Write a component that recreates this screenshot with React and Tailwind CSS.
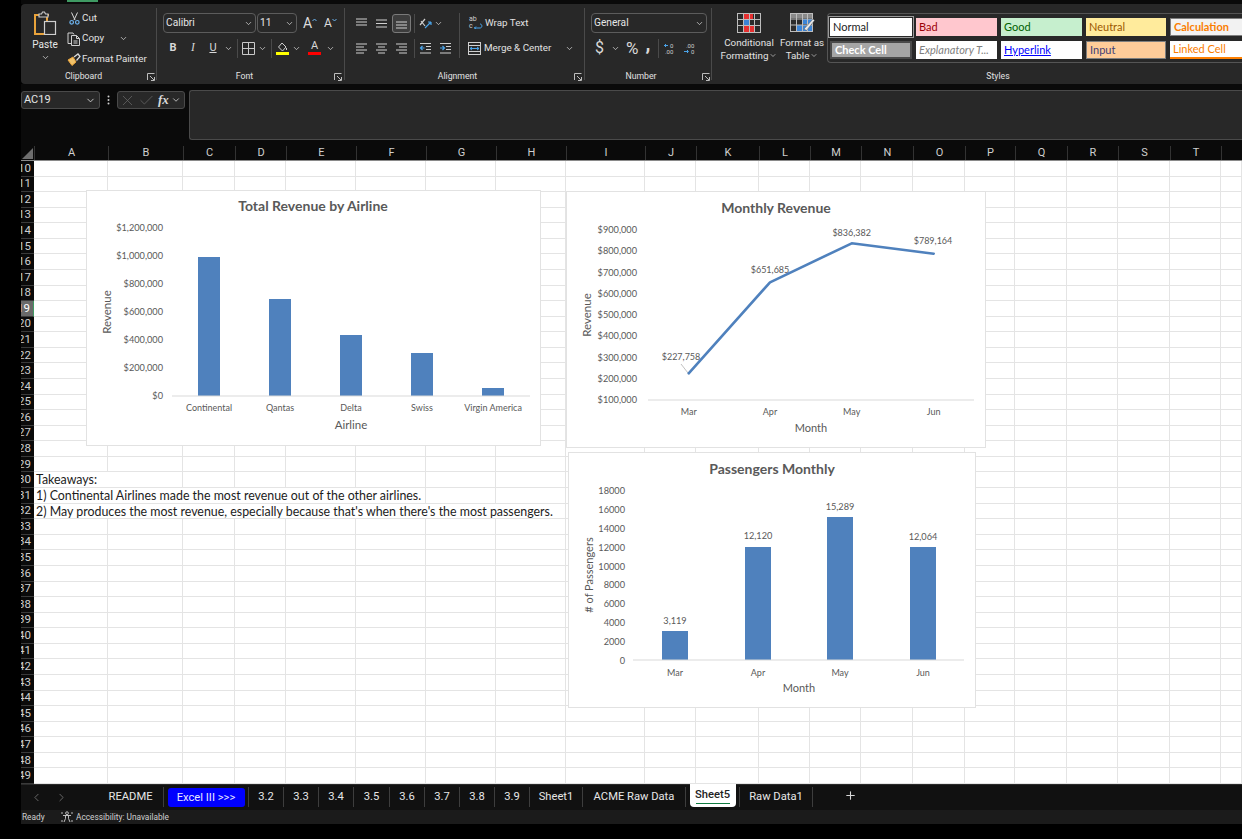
import { ChevronDown, ChevronLeft, ChevronRight, Plus, X, Check } from "lucide-react";

const chartFont = "Lato, 'Liberation Sans', sans-serif";

const Chev = ({ className = "" }) => (
  <ChevronDown size={9} strokeWidth={2} className={"text-[#d4d4d4] shrink-0 " + className} />
);

const Launcher = ({ className = "" }) => (
  <svg width="8" height="8" viewBox="0 0 8 8" className={"absolute -bottom-[1px] " + className} fill="none" stroke="#bdbdbd" strokeWidth="1">
    <path d="M0.5 7V0.5H7.5M3 3l4 4M4 7.5h3.5V4" />
  </svg>
);

const Lines = ({ rows }) => (
  <svg width="13" height="13" viewBox="0 0 13 13" stroke="#cfcfcf" strokeWidth="1.2">
    {rows.map((r, i) => (
      <line key={i} x1={r[0]} x2={r[1]} y1={r[2]} y2={r[2]} />
    ))}
  </svg>
);

const Indent = ({ flip }) => (
  <svg width="13" height="13" viewBox="0 0 13 13" fill="none" strokeWidth="1.2">
    <path d="M1 1.5h11M7 4.5h5M7 7.5h5M1 11h11" stroke="#cfcfcf" />
    <path d={flip ? "M1 6h4M3.5 4l2 2-2 2" : "M5.5 6h-4M3.5 4l-2 2 2 2"} stroke="#4aa3e8" />
  </svg>
);

const Group = ({ width, label, labelPad, launcher, children }) => (
  <div className={"relative mt-[4px] h-[72px] shrink-0 flex flex-col border-r border-[#4a4a4a] " + width}>
    <div className="flex-1 min-h-0">{children}</div>
    <div className={"h-[13px] translate-y-[3px] text-center text-[8.7px] leading-[13px] text-[#e2e2e2] " + labelPad}>{label}</div>
    {launcher && <Launcher className={launcher} />}
  </div>
);

const Combo = ({ text, width }) => (
  <div className={"h-[20px] flex items-center justify-between rounded-[4px] border border-[#5c5c5c] pl-[2px] pr-[2px] text-[10.2px] text-[#e6e6e6] " + width}>
    <span>{text}</span>
    <Chev />
  </div>
);

const RibbonSep = ({ className = "" }) => <div className={"w-px h-[19px] bg-[#4a4a4a] shrink-0 " + className} />;

const GrowA = ({ size, up }) => (
  <span className={"flex items-start text-[#dcdcdc] " + size}>
    A
    <svg width="5" height="4" viewBox="0 0 5 4" fill="none" stroke="#6db3ee" className="mt-[3px]">
      <path d={up ? "M.5 3l2-2 2 2" : "M.5 1l2 2 2-2"} />
    </svg>
  </span>
);

const Clipboard = () => (
  <div className="flex">
    <div className="ml-[3px] w-[42px] flex flex-col items-center pt-[3px]">
      <svg width="24" height="24" viewBox="0 0 24 24" fill="none">
        <path d="M8 4H2v19h9" stroke="#e9a33b" strokeWidth="2" />
        <path d="M16 4h-2v6" stroke="#e9a33b" strokeWidth="2" />
        <path d="M6 6V3h2.5l1-2h2l1 2H15v3z" fill="#2b2b2b" stroke="#c9c9c9" strokeWidth="1.2" />
        <rect x="11.5" y="10.5" width="11" height="13" fill="#2b2b2b" stroke="#cfcfcf" strokeWidth="1.2" />
      </svg>
      <div className="mt-[3px] text-[10px] leading-[14px] text-[#e6e6e6]">Paste</div>
      <Chev className="mt-[1px]" />
    </div>
    <div className="pt-[1px] flex flex-col gap-[2.5px] text-[9.8px] text-[#e2e2e2] whitespace-nowrap">
      <div className="h-[18px] flex items-center">
        <span className="w-[16px] flex justify-center">
          <svg width="11" height="13" viewBox="0 0 11 13" fill="none">
            <path d="M2.5 0.5l3.5 7.5M8.5 0.5L5 8" stroke="#d8d8d8" />
            <circle cx="2.7" cy="10.3" r="1.8" stroke="#6db3ee" strokeWidth="1.2" />
            <circle cx="8.3" cy="10.3" r="1.8" stroke="#6db3ee" strokeWidth="1.2" />
          </svg>
        </span>
        <span>Cut</span>
      </div>
      <div className="h-[18px] flex items-center">
        <span className="w-[16px] flex justify-center">
          <svg width="14" height="14" viewBox="0 0 14 14" fill="none" stroke="#cfcfcf" strokeWidth="1">
            <path d="M4 11.5H1V1h5l1 1.5" />
            <path d="M4.5 3.5h5l3 3v7h-8zM9.5 3.5v3h3M6.5 9h4M6.5 11h4" />
          </svg>
        </span>
        <span>Copy</span>
        <Chev className="ml-[15px]" />
      </div>
      <div className="h-[18px] flex items-center">
        <span className="w-[16px] flex justify-center">
          <svg width="14" height="13" viewBox="0 0 14 13" fill="none">
            <path d="M1 7l5-3 3 5-4 3.5z" fill="#f0c26a" stroke="#e9a33b" />
            <path d="M7 4l4-3 2 2.5-3.5 4" stroke="#d8d8d8" strokeWidth="1.3" />
          </svg>
        </span>
        <span>Format Painter</span>
      </div>
    </div>
  </div>
);

const FontGroup = () => (
  <div className="pt-[5px] pl-[6px]">
    <div className="flex items-center">
      <Combo text="Calibri" width="w-[93px]" />
      <Combo text="11" width="w-[40px] ml-[1px]" />
      <span className="ml-[6px] w-[21px]"><GrowA size="text-[14px] leading-[16px]" up /></span>
      <span className="w-[20px]"><GrowA size="text-[12px] leading-[16px]" /></span>
    </div>
    <div className="flex items-center mt-[5px] h-[20px] text-[#d8d8d8]">
      <span className="w-[20px] text-center text-[11px] font-bold">B</span>
      <span className="w-[20px] text-center text-[11.5px] italic" style={{ fontFamily: "'Liberation Serif', serif" }}>I</span>
      <span className="w-[20px] text-center text-[11px] underline">U</span>
      <Chev className="ml-[1px]" />
      <RibbonSep className="ml-[4px]" />
      <svg width="13" height="13" viewBox="0 0 13 13" fill="none" stroke="#c9c9c9" className="ml-[4px]">
        <path d="M.5.5h12v12H.5zM6.5.5v12M.5 6.5h12" />
      </svg>
      <Chev className="ml-[3px]" />
      <RibbonSep className="ml-[4px]" />
      <span className="ml-[4px] w-[13px] flex flex-col items-center">
        <svg width="11" height="10" viewBox="0 0 11 10" fill="none" stroke="#d0d0d0">
          <path d="M5 1l4 4-3.5 4-4-4zM9.5 6v2" />
        </svg>
        <span className="w-[13px] h-[3px] bg-[#ffff00]" />
      </span>
      <Chev className="ml-[3px]" />
      <span className="ml-[7px] w-[13px] flex flex-col items-center text-[11px] leading-[10px]">
        A
        <span className="w-[13px] h-[3px] bg-[#ff0000] mt-[1px]" />
      </span>
      <Chev className="ml-[5px]" />
    </div>
  </div>
);

const Alignment = () => (
  <div className="flex pt-[5px] pl-[6px]">
    <div className="w-[108px]">
      <div className="flex items-center h-[20px]">
        <span className="w-[20px] flex justify-center"><Lines rows={[[1, 12, 2], [1, 12, 5], [1, 12, 8]]} /></span>
        <span className="w-[21px] flex justify-center"><Lines rows={[[1, 12, 3], [1, 12, 6.5], [1, 12, 10]]} /></span>
        <span className="w-[19px] h-[19px] flex items-center justify-center rounded-[3px] border border-[#7a7a7a] bg-[#3d3d3d]"><Lines rows={[[1, 12, 5], [1, 12, 8], [1, 12, 11]]} /></span>
        <RibbonSep className="ml-[3px]" />
        <svg width="14" height="14" viewBox="0 0 14 14" fill="none" className="ml-[3px]">
          <path d="M2 9l5-6M3 5l4 5" stroke="#d0d0d0" strokeWidth="1.2" />
          <path d="M7 12l6-6M13 6h-3M13 6v3" stroke="#4aa3e8" strokeWidth="1.2" />
        </svg>
        <Chev className="ml-[2px]" />
      </div>
      <div className="flex items-center h-[20px] mt-[5px]">
        <span className="w-[20px] flex justify-center"><Lines rows={[[1, 12, 2], [1, 9, 5], [1, 12, 8], [1, 9, 11]]} /></span>
        <span className="w-[21px] flex justify-center"><Lines rows={[[1, 12, 2], [3, 10, 5], [1, 12, 8], [3, 10, 11]]} /></span>
        <span className="w-[19px] flex justify-center"><Lines rows={[[1, 12, 2], [4, 12, 5], [1, 12, 8], [4, 12, 11]]} /></span>
        <RibbonSep className="ml-[3px]" />
        <span className="w-[20px] flex justify-center"><Indent /></span>
        <span className="w-[20px] flex justify-center"><Indent flip /></span>
      </div>
    </div>
    <div className="border-l border-[#4a4a4a] h-[45px] pl-[8px] text-[9.8px] text-[#e2e2e2] whitespace-nowrap">
      <div className="flex items-center h-[20px] gap-[2px]">
        <span className="relative w-[14px] h-[14px] ml-[1px] text-[7px] leading-[7px] text-[#d0d0d0]">
          ab
          <br />c
          <svg width="9" height="6" viewBox="0 0 9 6" fill="none" stroke="#4aa3e8" className="absolute right-0 bottom-[1px]">
            <path d="M0 5h6c2.5 0 2.5-4 0-4M2 3.5L.5 5 2 6" />
          </svg>
        </span>
        <span>Wrap Text</span>
      </div>
      <div className="flex items-center h-[20px] mt-[5px] gap-[2px]">
        <svg width="13" height="13" viewBox="0 0 13 13" fill="none" className="mr-[1px]">
          <rect x=".5" y=".5" width="12" height="12" stroke="#cfcfcf" />
          <path d="M.5 3.5h12M.5 9.5h12" stroke="#cfcfcf" />
          <path d="M2 6.5h9M4 5l-2 1.5L4 8M9 5l2 1.5L9 8" stroke="#4aa3e8" />
        </svg>
        <span>Merge &amp; Center</span>
        <Chev className="ml-[12px]" />
      </div>
    </div>
  </div>
);

const NumberGroup = () => (
  <div className="pt-[5px] pl-[6px]">
    <Combo text="General" width="w-[116px]" />
    <div className="flex items-center h-[20px] mt-[5px] text-[#d8d8d8]">
      <span className="w-[17px] text-center text-[16px] leading-none">$</span>
      <Chev className="ml-[3px]" />
      <span className="ml-[6px] text-[17px] leading-none">%</span>
      <span className="ml-[7px] text-[20px] font-bold leading-none -translate-y-[5px]">,</span>
      <RibbonSep className="ml-[8px]" />
      <svg width="13" height="13" viewBox="0 0 13 13" fill="none" className="ml-[5px]">
        <path d="M0 3.5h4M2 2L.5 3.5 2 5" stroke="#4aa3e8" />
        <text x="6" y="5.5" fontSize="6" fill="#cfcfcf">0</text>
        <text x="1" y="12" fontSize="6" fill="#cfcfcf">.00</text>
      </svg>
      <svg width="13" height="13" viewBox="0 0 13 13" fill="none" className="ml-[7px]">
        <text x="2" y="5.5" fontSize="6" fill="#cfcfcf">.00</text>
        <path d="M0 9.5h4M3 8l1.5 1.5L3 11" stroke="#4aa3e8" />
        <text x="7" y="12" fontSize="6" fill="#cfcfcf">0</text>
      </svg>
    </div>
  </div>
);

const CondIcon = () => (
  <svg width="24" height="20" viewBox="0 0 24 20">
    <rect x=".5" y=".5" width="23" height="19" fill="#2b2b2b" stroke="#bdbdbd" />
    <rect x="7" y="1" width="9" height="5" fill="#e53030" />
    <rect x="7" y="7" width="5" height="5" fill="#3b84d6" />
    <rect x="7" y="13" width="10" height="6" fill="#e53030" />
    <path d="M.5 6.5h23M.5 12.5h23M6.5 .5v19M12.5 .5v19M17.5 .5v19" stroke="#bdbdbd" fill="none" />
  </svg>
);

const TableIcon = () => (
  <svg width="25" height="20" viewBox="0 0 25 20">
    <rect x=".5" y=".5" width="22" height="18" fill="#2b2b2b" stroke="#bdbdbd" />
    <rect x="1" y="1" width="21" height="4" fill="#8a8a8a" />
    <rect x="12" y="6" width="10" height="5" fill="#3b84d6" />
    <rect x="6" y="12" width="16" height="6" fill="#3b84d6" />
    <path d="M.5 6h22M.5 12h22M6.5 .5v18M12.5 .5v18M17.5 .5v18" stroke="#bdbdbd" fill="none" />
    <path d="M14 16l9-10 1.5 1.5-8 10z" fill="#e8e8e8" stroke="#555" strokeWidth=".5" />
  </svg>
);

const styleCells = [
  ["Normal", "bg-white text-[#222] outline outline-1 outline-offset-1 outline-[#9a9a9a]"],
  ["Bad", "bg-[#ffc7ce] text-[#9c0006]"],
  ["Good", "bg-[#c6efce] text-[#006100]"],
  ["Neutral", "bg-[#ffeb9c] text-[#9c5700]"],
  ["Calculation", "bg-[#f2f2f2] text-[#fa7d00] font-bold border border-[#7f7f7f]"],
  ["Check Cell", "bg-[#a5a5a5] text-white font-bold border-[2px] border-double border-[#4a4a4a]"],
  ["Explanatory T...", "bg-white text-[#7f7f7f] italic"],
  ["Hyperlink", "bg-white text-[#0000ff] underline"],
  ["Input", "bg-[#ffcc99] text-[#3f3f76] border border-[#7f7f7f]"],
  ["Linked Cell", "bg-white text-[#fa7d00] border-b-2 border-[#ff8001]"],
];

const Ribbon = () => (
  <div className="h-[80px] bg-[#282828] rounded-l-[4px] flex shrink-0 overflow-hidden" style={{ fontFamily: "Roboto, 'Noto Sans', sans-serif" }}>
    <Group width="w-[136px]" label="Clipboard" labelPad="pr-[10px]" launcher="left-[126px]">
      <Clipboard />
    </Group>
    <Group width="w-[188px]" label="Font" labelPad="pr-[12px]" launcher="left-[177px]">
      <FontGroup />
    </Group>
    <Group width="w-[240px]" label="Alignment" labelPad="pr-[14px]" launcher="left-[229px]">
      <Alignment />
    </Group>
    <Group width="w-[127px]" label="Number" labelPad="pr-[14px]" launcher="left-[117px]">
      <NumberGroup />
    </Group>
    <div className="mt-[4px] h-[72px] flex-1 flex flex-col min-w-0">
      <div className="flex-1 flex pt-[5px] min-h-0">
        <div className="w-[60px] ml-[7px] shrink-0 flex flex-col items-center text-[9.8px] leading-[13px] text-[#e2e2e2] text-center">
          <CondIcon />
          <span className="mt-[3px]">Conditional</span>
          <span className="flex items-center whitespace-nowrap">Formatting <Chev className="ml-[1px] w-[8px]" /></span>
        </div>
        <div className="w-[46px] shrink-0 flex flex-col items-center text-[9.8px] leading-[13px] text-[#e2e2e2] text-center whitespace-nowrap">
          <TableIcon />
          <span className="mt-[3px]">Format as</span>
          <span className="flex items-center">Table <Chev className="ml-[1px] w-[8px]" /></span>
        </div>
        <div className="ml-[2px] flex-1 h-[50px] rounded-l-[4px] border border-r-0 border-[#555] pl-[2px] pt-[4px] overflow-hidden">
          <div className="grid grid-cols-[82px_81px_81px_80px_81px] grid-rows-[18px_18px] gap-x-[4px] gap-y-[5px] text-[11px]" style={{ fontFamily: chartFont }}>
            {styleCells.map(([name, cls]) => (
              <div key={name} className={"flex items-center px-[3px] whitespace-nowrap overflow-hidden " + cls}>
                {name}
              </div>
            ))}
          </div>
        </div>
      </div>
      <div className="h-[13px] translate-y-[3px] pl-[42px] text-center text-[8.7px] leading-[13px] text-[#e2e2e2]">Styles</div>
    </div>
  </div>
);

const FormulaBar = () => (
  <div className="h-[62px] bg-[#0a0a0a] flex items-start shrink-0" style={{ fontFamily: "Roboto, 'Noto Sans', sans-serif" }}>
    <div className="mt-[7px] h-[18px] w-[79px] flex items-center justify-between rounded-[3px] border border-[#4a4a4a] bg-[#282828] pl-[2px] pr-[3px] text-[11px] text-[#e6e6e6]">
      <span>AC19</span>
      <ChevronDown size={11} className="text-[#cfcfcf]" />
    </div>
    <span className="mt-[7px] w-[17px] h-[18px] flex items-center justify-center">
      <svg width="3" height="10" viewBox="0 0 3 10" fill="#cfcfcf">
        <circle cx="1.5" cy="1.5" r="1" />
        <circle cx="1.5" cy="5" r="1" />
        <circle cx="1.5" cy="8.5" r="1" />
      </svg>
    </span>
    <div className="mt-[7px] h-[18px] w-[68px] flex items-center rounded-[3px] border border-[#4a4a4a] bg-[#282828] pl-[1px] text-[#6b6b6b]">
      <X size={17} strokeWidth={1} />
      <Check size={17} strokeWidth={1} className="ml-[2px]" />
      <span className="ml-[3px] text-[13px] italic font-bold text-[#d8d8d8]" style={{ fontFamily: "'Liberation Serif', serif" }}>fx</span>
      <ChevronDown size={10} className="ml-[2px] text-[#cfcfcf]" />
    </div>
    <div className="ml-[4px] mt-[6px] h-[50px] flex-1 rounded-l-[3px] border border-r-0 border-[#4a4a4a] bg-[#282828]" />
  </div>
);

const colWidths = "grid-cols-[13px_74px_75px_52px_51px_70px_70px_70px_70px_79px_51px_63px_51px_51px_52px_52px_50px_52px_51px_52px_51px_21px]";
const colNames = ["A", "B", "C", "D", "E", "F", "G", "H", "I", "J", "K", "L", "M", "N", "O", "P", "Q", "R", "S", "T", ""];
const rowNums = Array.from({ length: 40 }, (_, i) => i + 10);
// span = how many columns the overflowing text runs across
const notes = {
  30: { text: "Takeaways:", span: 1 },
  31: { text: "1) Continental Airlines made the most revenue out of the other airlines.", span: 5 },
  32: { text: "2) May produces the most revenue, especially because that's when there's the most passengers.", span: 7 },
};

const ColumnHeader = () => (
  <div className={"grid h-[15px] shrink-0 bg-[#0a0a0a] border-b border-[#8a8a8a] " + colWidths} style={{ fontFamily: "Roboto, sans-serif" }}>
    <div className="relative">
      <div className="absolute right-[1px] bottom-[1px] w-0 h-0 border-l-[11px] border-l-transparent border-b-[11px] border-b-[#6e6e6e]" />
    </div>
    {colNames.map((c, i) => (
      <div key={i} className="text-center text-[11px] leading-[14px] text-[#cfcfcf] border-l border-[#333]">
        {c}
      </div>
    ))}
  </div>
);

const Grid = () => (
  <div className={"flex-1 min-h-0 grid grid-rows-[repeat(40,minmax(0,1fr))] bg-white " + colWidths}>
    {rowNums.map((row) => [
      <div
        key={"h" + row}
        className={
          "flex justify-end items-center overflow-hidden pr-[3px] text-[11.5px] border-b border-[#3a3a3a] " +
          (row === 19 ? "bg-[#6a6a6a] text-white border-r border-r-[#3f9a63]" : "bg-[#0a0a0a] text-[#cfcfcf]")
        }
        style={{ fontFamily: "Roboto, sans-serif" }}
      >
        {row}
      </div>,
      ...colNames.map((c, i) => (
        <div
          key={row + "-" + i}
          className={"border-b border-[#e4e4e4] min-h-0 " + (notes[row] && i < notes[row].span ? "" : "border-r")}
        >
          {i === 0 && notes[row] && (
            <span className="pl-[2px] block whitespace-nowrap text-[12.4px] leading-[15px] text-[#1c1c1c]" style={{ fontFamily: chartFont }}>
              {notes[row].text}
            </span>
          )}
        </div>
      )),
    ])}
  </div>
);

const barColor = "#4f81bd";

const AxisText = ({ x, y, children, anchor = "middle", size = 9.2, rotate, fill = "#595959", weight }) => (
  <text
    x={x}
    y={rotate ? y : y + 1}
    textAnchor={anchor}
    fontSize={size}
    fill={fill}
    fontWeight={weight}
    dominantBaseline="middle"
    transform={rotate ? `rotate(-90 ${x} ${y})` : undefined}
  >
    {children}
  </text>
);

const Chart = ({ x, y, w, h, className, children }) => (
  <div className={"absolute bg-white border border-[#e2e2e2] " + className}>
    <svg width="100%" height="100%" viewBox={`${x + 1} ${y + 1} ${w - 2} ${h - 2}`} style={{ fontFamily: chartFont }}>
      {children}
    </svg>
  </div>
);

const airlines = [
  ["Continental", 198, 257, 209],
  ["Qantas", 269, 299, 280],
  ["Delta", 340, 335, 351],
  ["Swiss", 411, 353, 422],
  ["Virgin America", 482, 388, 493],
];
const revTicks = ["$1,200,000", "$1,000,000", "$800,000", "$600,000", "$400,000", "$200,000", "$0"];

const AirlineChart = () => (
  <Chart x={86} y={190} w={455} h={256} className="left-[65px] top-[29px] w-[455px] h-[256px]">
    <AxisText x={313} y={206} size={14} weight="700">Total Revenue by Airline</AxisText>
    {revTicks.map((t, i) => (
      <AxisText key={t} x={163} y={228 + i * 28} anchor="end">{t}</AxisText>
    ))}
    {airlines.map(([name, bx, top, cx]) => (
      <g key={name}>
        <rect x={bx} y={top} width={22} height={396 - top} fill={barColor} />
        <AxisText x={cx} y={408} size={9}>{name}</AxisText>
      </g>
    ))}
    <line x1={172} x2={530} y1={396} y2={396} stroke="#d9d9d9" />
    <AxisText x={108} y={312} size={11.5} rotate>Revenue</AxisText>
    <AxisText x={351} y={425} size={11.5}>Airline</AxisText>
  </Chart>
);

const monthPoints = [
  ["Mar", 688.7, 373.3, "$227,758", 681, 357],
  ["Apr", 770, 282.3, "$651,685", 770, 270],
  ["May", 851.7, 243.3, "$836,382", 851.7, 233],
  ["Jun", 933.7, 253.7, "$789,164", 933, 241],
];
const monthTicks = ["$900,000", "$800,000", "$700,000", "$600,000", "$500,000", "$400,000", "$300,000", "$200,000", "$100,000"];

const RevenueChart = () => (
  <Chart x={566} y={191} w={420} h={257} className="left-[545px] top-[30px] w-[420px] h-[257px]">
    <AxisText x={776} y={208} size={14} weight="700">Monthly Revenue</AxisText>
    {monthTicks.map((t, i) => (
      <AxisText key={t} x={637} y={229.7 + i * 21.25} anchor="end">{t}</AxisText>
    ))}
    <line x1={648} x2={974} y1={400} y2={400} stroke="#d9d9d9" />
    <line x1={681} x2={688} y1={364} y2={373} stroke="#a6a6a6" strokeWidth={0.7} />
    <polyline points={monthPoints.map((p) => `${p[1]},${p[2]}`).join(" ")} fill="none" stroke={barColor} strokeWidth={2.6} strokeLinecap="round" strokeLinejoin="round" />
    {monthPoints.map(([m, px, , label, lx, ly]) => (
      <g key={m}>
        <AxisText x={px} y={412} size={9}>{m}</AxisText>
        <AxisText x={lx} y={ly} size={9}>{label}</AxisText>
      </g>
    ))}
    <AxisText x={588} y={315} size={11.5} rotate>Revenue</AxisText>
    <AxisText x={811} y={428} size={11}>Month</AxisText>
  </Chart>
);

const passengerBars = [
  ["Mar", 662, 631, "3,119", 621],
  ["Apr", 745, 547, "12,120", 536],
  ["May", 827, 517, "15,289", 507],
  ["Jun", 910, 547, "12,064", 537],
];
const passengerTicks = ["18000", "16000", "14000", "12000", "10000", "8000", "6000", "4000", "2000", "0"];

const PassengerChart = () => (
  <Chart x={568} y={452} w={408} h={256} className="left-[547px] top-[291px] w-[408px] h-[256px]">
    <AxisText x={772} y={469} size={14} weight="700">Passengers Monthly</AxisText>
    {passengerTicks.map((t, i) => (
      <AxisText key={t} x={625} y={491 + i * 18.8} anchor="end">{t}</AxisText>
    ))}
    {passengerBars.map(([m, bx, top, label, ly]) => (
      <g key={m}>
        <rect x={bx} y={top} width={26} height={660 - top} fill={barColor} />
        <AxisText x={bx + 13} y={ly} size={9.2}>{label}</AxisText>
        <AxisText x={bx + 13} y={673} size={9}>{m}</AxisText>
      </g>
    ))}
    <line x1={633} x2={964} y1={660} y2={660} stroke="#d9d9d9" />
    <AxisText x={590} y={575} size={11} rotate># of Passengers</AxisText>
    <AxisText x={799} y={688} size={11}>Month</AxisText>
  </Chart>
);

const tabs = [
  ["README", "w-[66px]"],
  ["Excel III >>>", "w-[85px]", "excel"],
  ["3.2", "w-[35px]"],
  ["3.3", "w-[35px]"],
  ["3.4", "w-[35px]"],
  ["3.5", "w-[36px]"],
  ["3.6", "w-[35px]"],
  ["3.7", "w-[35px]"],
  ["3.8", "w-[35px]"],
  ["3.9", "w-[35px]"],
  ["Sheet1", "w-[53px]"],
  ["ACME Raw Data", "w-[103px]"],
  ["Sheet5", "w-[54px]", "active"],
  ["Raw Data1", "w-[73px]"],
];

const TabBar = () => (
  <div className="h-[26px] bg-[#111] flex items-start shrink-0 border-t border-[#2a2a2a] text-[11.2px] text-[#e6e6e6]" style={{ fontFamily: "Roboto, 'Noto Sans', sans-serif" }}>
    <div className="w-[77px] h-[24px] flex items-center text-[#8a8a8a] shrink-0">
      <ChevronLeft size={13} strokeWidth={1.3} className="ml-[9px]" />
      <ChevronRight size={13} strokeWidth={1.3} className="ml-[12px]" />
    </div>
    {tabs.map(([name, w, kind]) => (
      <div key={name} className={"h-[20px] flex justify-center items-center shrink-0 mt-[2px] border-r border-[#3d3d3d] " + w}>
        {kind === "excel" && (
          <span className="w-[77px] h-[19px] rounded-[3px] bg-[#0000ff] text-center leading-[19px] text-[#e8e8ff]">{name}</span>
        )}
        {kind === "active" && (
          <span className="relative self-start w-[46px] h-[23px] -mt-[3px] rounded-b-[4px] bg-white text-center font-medium text-[#222] leading-[21px]">
            {name}
            <span className="absolute left-[6px] right-[6px] bottom-[3px] h-[1px] bg-[#107c41]" />
          </span>
        )}
        {!kind && name}
      </div>
    ))}
    <Plus size={13} className="ml-[31px] mt-[4px] text-[#d8d8d8]" />
  </div>
);

const StatusBar = () => (
  <div className="h-[14px] bg-[#1b1b1b] flex items-center shrink-0 text-[8.3px] text-[#d0d0d0]" style={{ fontFamily: "Roboto, 'Noto Sans', sans-serif" }}>
    <span className="ml-[1px] w-[39px]">Ready</span>
    <svg width="12" height="12" viewBox="0 0 12 12" fill="none" stroke="#cfcfcf" strokeWidth=".9">
      <circle cx="6" cy="2.2" r="1.4" />
      <path d="M2 4.5h8M4.5 4.5v3l-1.5 3.5M7.5 4.5v3l1.5 3.5M1 1v2M11 1v2M1 9v2M11 9v2" />
    </svg>
    <span className="ml-[3px]">Accessibility: Unavailable</span>
  </div>
);

export default function App() {
  return (
    <div className="w-[1242px] h-[839px] bg-black pl-[21px] pb-[15px] flex flex-col overflow-hidden" style={{ fontFamily: "'Open Sans', 'Noto Sans', sans-serif" }}>
      <div className="h-[4px] shrink-0 bg-[#0a0a0a]">
        <div className="ml-[46px] w-[31px] h-[2px] bg-[#3f9a63]" />
      </div>
      <Ribbon />
      <FormulaBar />
      <ColumnHeader />
      <div className="relative flex-1 min-h-0 flex flex-col">
        <Grid />
        <AirlineChart />
        <RevenueChart />
        <PassengerChart />
      </div>
      <TabBar />
      <StatusBar />
    </div>
  );
}
